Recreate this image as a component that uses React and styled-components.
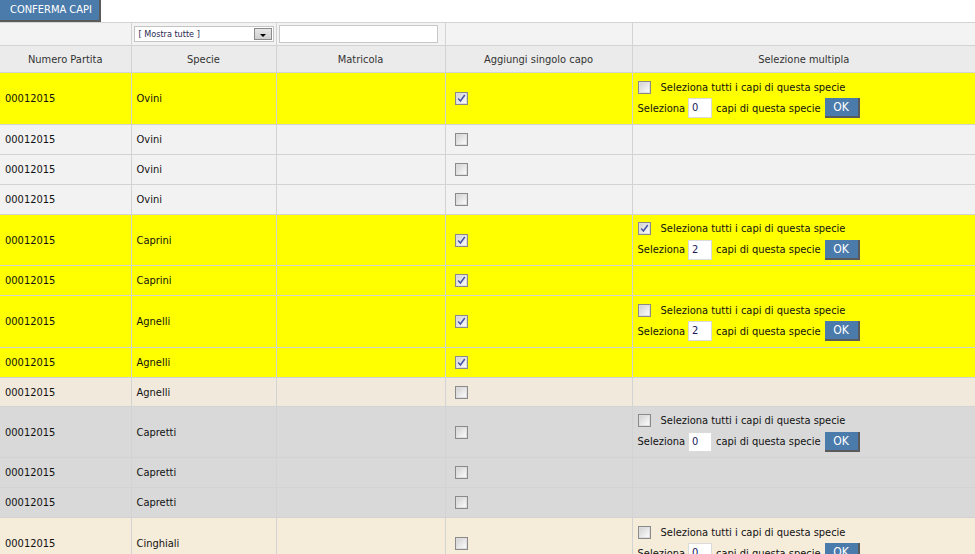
import React from "react";
import styled, { createGlobalStyle, css } from "styled-components";

const Global = createGlobalStyle`
  html, body { margin: 0; padding: 0; background: #fff; }
  body { font-family: "DejaVu Sans Condensed", "DejaVu Sans", Verdana, sans-serif; font-size: 11px; color: #222; }
`;

const Page = styled.div`
  width: 975px;
`;

const Toolbar = styled.div`
  display: flex;
  height: 22px;
`;

const BlueButton = styled.button`
  box-sizing: border-box;
  height: ${(p) => p.$h || 22}px;
  width: ${(p) => p.$w}px;
  padding: 0 0 0 ${(p) => p.$pl || 0}px;
  text-align: ${(p) => (p.$pl ? "left" : "center")};
  background: #4b7bab;
  color: #fff;
  font-family: inherit;
  font-size: ${(p) => p.$fs || 11}px;
  border: none;
  border-right: 2px solid #5a5a5a;
  border-bottom: 2px solid #5a5a5a;
  border-radius: 0;
  cursor: pointer;
  line-height: 18px;
`;

const Table = styled.table`
  width: 975px;
  table-layout: fixed;
  border-collapse: collapse;
`;

const bgs = {
  filter: "#f3f3f3",
  head: "#ebebeb",
  yellow: "#ffff00",
  light: "#f2f2f2",
  beige: "#f2e9dd",
  grey: "#d9d9d9",
  sand: "#f6ecda",
};

const Tr = styled.tr`
  background: ${(p) => bgs[p.$tone]};
  height: ${(p) => p.$h}px;
`;

const cellBase = css`
  border: 1px solid #d3d3d3;
  padding: 0 5px;
  vertical-align: middle;
  white-space: nowrap;
  overflow: hidden;
  &:first-child { border-left: none; }
  &:last-child { border-right: none; }
`;

const Th = styled.th`
  ${cellBase}
  font-weight: normal;
  text-align: center;
  color: #333;
`;

const Td = styled.td`
  ${cellBase}
  text-align: left;
  color: #111;
`;

const SelectBox = styled.div`
  box-sizing: border-box;
  width: 140px;
  height: 16px;
  margin-left: -3px;
  background: #fff;
  border: 1px solid #c4c4c4;
  display: flex;
  align-items: center;
  justify-content: space-between;
  padding: 0 1px 0 4px;
  font-size: 9px;
  color: #2a2a50;
`;

const SelectArrow = styled.span`
  box-sizing: border-box;
  width: 18px;
  height: 12px;
  background: linear-gradient(#e6e6e6, #cfcfcf);
  border: 1px solid #8a8a8a;
  display: flex;
  align-items: flex-end;
  justify-content: center;
  padding-bottom: 2px;
  &::after {
    content: "";
    border-left: 3px solid transparent;
    border-right: 3px solid transparent;
    border-top: 3px solid #000;
  }
`;

const TextBox = styled.div`
  box-sizing: border-box;
  width: ${(p) => p.$w}px;
  height: ${(p) => p.$h}px;
  margin-left: ${(p) => p.$ml || 0}px;
  background: #fff;
  border: 1px solid ${(p) => p.$bc || "#cfcfcf"};
  padding-left: 3px;
  line-height: ${(p) => p.$h - 2}px;
  font-size: 11px;
  color: #1a1a60;
`;

const CheckBox = styled.span`
  box-sizing: border-box;
  display: inline-flex;
  align-items: center;
  justify-content: center;
  width: 13px;
  height: 13px;
  margin-left: ${(p) => p.$ml || 0}px;
  border: 1px solid #8a8a8a;
  background: linear-gradient(135deg, #cfcfcf 0%, #ececec 60%, #ffffff 100%);
  box-shadow: inset 0 0 0 1px #dedede;
  flex: none;
  vertical-align: middle;
`;

const Check = ({ checked, ml }) => (
  <CheckBox $ml={ml}>
    {checked && (
      <svg width="9" height="9" viewBox="0 0 9 9">
        <path d="M1.2 4.6 L3.4 7 L7.8 1" fill="none" stroke="#4556a6" strokeWidth="1.5" />
      </svg>
    )}
  </CheckBox>
);

const Multi = styled.div`
  display: flex;
  flex-direction: column;
  gap: 2px;
`;

const MultiLine = styled.div`
  display: flex;
  align-items: center;
  height: ${(p) => p.$h}px;
`;

const Label = styled.span`
  margin-left: ${(p) => p.$ml || 0}px;
  margin-right: ${(p) => p.$mr || 0}px;
`;

const rows = [
  { h: 52, tone: "yellow", sp: "Ovini", c: true, multi: { all: false, n: 0 } },
  { h: 30, tone: "light", sp: "Ovini" },
  { h: 30, tone: "light", sp: "Ovini" },
  { h: 30, tone: "light", sp: "Ovini" },
  { h: 51, tone: "yellow", sp: "Caprini", c: true, multi: { all: true, n: 2 } },
  { h: 30, tone: "yellow", sp: "Caprini", c: true },
  { h: 52, tone: "yellow", sp: "Agnelli", c: true, multi: { all: false, n: 2 } },
  { h: 30, tone: "yellow", sp: "Agnelli", c: true },
  { h: 29, tone: "beige", sp: "Agnelli" },
  { h: 51, tone: "grey", sp: "Capretti", multi: { all: false, n: 0 } },
  { h: 30, tone: "grey", sp: "Capretti" },
  { h: 30, tone: "grey", sp: "Capretti" },
  { h: 52, tone: "sand", sp: "Cinghiali", multi: { all: false, n: 0 } },
];

export default function App() {
  return (
    <Page>
      <Global />
      <Toolbar>
        <BlueButton $w={101} $pl={10}>CONFERMA CAPI</BlueButton>
      </Toolbar>
      <Table>
        <colgroup>
          <col style={{ width: 131 }} />
          <col style={{ width: 145 }} />
          <col style={{ width: 169 }} />
          <col style={{ width: 187 }} />
          <col style={{ width: 343 }} />
        </colgroup>
        <thead>
          <Tr $tone="filter" $h={23}>
            <Th />
            <Th>
              <SelectBox>
                <span>[ Mostra tutte ]</span>
                <SelectArrow />
              </SelectBox>
            </Th>
            <Th>
              <TextBox $w={159} $h={18} $ml={-3} $bc="#c8c8c8" />
            </Th>
            <Th />
            <Th />
          </Tr>
          <Tr $tone="head" $h={27}>
            <Th>Numero Partita</Th>
            <Th>Specie</Th>
            <Th>Matricola</Th>
            <Th>Aggiungi singolo capo</Th>
            <Th>Selezione multipla</Th>
          </Tr>
        </thead>
        <tbody>
          {rows.map((r, i) => (
            <Tr key={i} $tone={r.tone} $h={r.h}>
              <Td>00012015</Td>
              <Td>{r.sp}</Td>
              <Td />
              <Td>
                <Check checked={r.c} ml={4} />
              </Td>
              <Td>
                {r.multi && (
                  <Multi>
                    <MultiLine $h={17}>
                      <Check checked={r.multi.all} />
                      <Label $ml={10}>Seleziona tutti i capi di questa specie</Label>
                    </MultiLine>
                    <MultiLine $h={21}>
                      <Label $mr={3}>Seleziona</Label>
                      <TextBox $w={24} $h={20} $bc="#dadada">{r.multi.n}</TextBox>
                      <Label $ml={4} $mr={4}>capi di questa specie</Label>
                      <BlueButton $w={35} $h={20} $fs={12}>OK</BlueButton>
                    </MultiLine>
                  </Multi>
                )}
              </Td>
            </Tr>
          ))}
        </tbody>
      </Table>
    </Page>
  );
}
